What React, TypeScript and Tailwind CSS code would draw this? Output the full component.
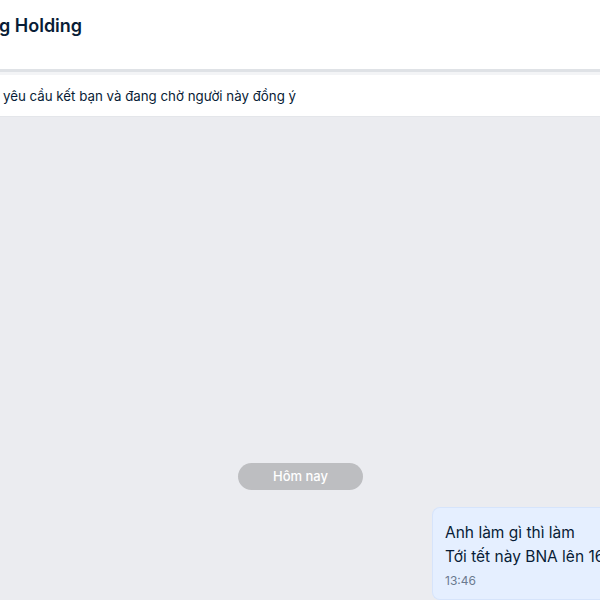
export default function App() {
  return (
    <div className="w-[600px] h-[600px] overflow-hidden flex flex-col bg-[#ebecf0] font-['Inter',sans-serif] text-[#081c36]">
      <header className="h-[69px] shrink-0 bg-white flex items-start pt-[13px]">
        <h1 className="ml-[-1px] text-[18px] leading-[26px] font-semibold whitespace-nowrap">g Holding</h1>
      </header>
      <div className="h-[3px] shrink-0 bg-[#dfe2e6]" />
      <div className="h-[3px] shrink-0 bg-[#f3f4f6]" />
      <div className="h-[42px] shrink-0 bg-white flex items-center pl-[3px] pt-[2px] border-b border-[#e4e6ea]">
        <p className="text-[13.3px] whitespace-nowrap">yêu cầu kết bạn và đang chờ người này đồng ý</p>
      </div>
      <main className="flex-1 flex flex-col justify-end">
        <div className="flex justify-center pl-[1px] mb-[17px]">
          <span className="h-[27px] w-[125px] rounded-full bg-[#bdbec1] text-white text-[13px] font-medium flex items-center justify-center">
            Hôm nay
          </span>
        </div>
        <div className="flex justify-end">
          <div className="w-[168px] h-[93px] ml-auto bg-[#e5efff] border border-[#d6e4fb] border-r-0 rounded-l-lg pl-[12px] pt-[13px] overflow-hidden">
            <p className="text-[15.5px] leading-[24px] whitespace-nowrap">Anh làm gì thì làm</p>
            <p className="text-[15.5px] leading-[24px] whitespace-nowrap">Tới tết này BNA lên 16</p>
            <p className="text-[12px] leading-[24px] text-[#6b7a90]">13:46</p>
          </div>
        </div>
      </main>
    </div>
  );
}
